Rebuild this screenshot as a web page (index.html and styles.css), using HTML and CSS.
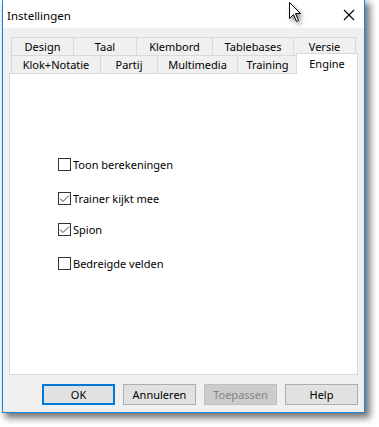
FILE: index.html
```html
<!DOCTYPE html>
<html lang="nl">
<head>
<meta charset="utf-8">
<title>Instellingen</title>
<link rel="stylesheet" href="styles.css">
</head>
<body>
<div class="window">
  <div class="titlebar">
    <span class="title">Instellingen</span>
    <svg class="close" width="12" height="12" viewBox="0 0 12 12"><path d="M1 1 L11 11 M11 1 L1 11" stroke="#000" stroke-width="1.1" fill="none"/></svg>
  </div>
  <div class="content">
    <div class="tabs">
      <div class="tabrow row1">
        <div class="tab">Design</div>
        <div class="tab">Taal</div>
        <div class="tab">Klembord</div>
        <div class="tab">Tablebases</div>
        <div class="tab last">Versie</div>
      </div>
      <div class="tabrow row2">
        <div class="tab">Klok+Notatie</div>
        <div class="tab">Partij</div>
        <div class="tab">Multimedia</div>
        <div class="tab">Training</div>
        <div class="tab selected">Engine</div>
      </div>
    </div>
    <div class="panel">
      <label class="check first"><span class="box"></span><span class="label">Toon berekeningen</span></label>
      <label class="check gap34"><span class="box"><svg width="11" height="11" viewBox="0 0 11 11"><polyline points="1,5.5 4,8.5 10,2.5" fill="none" stroke="#444" stroke-width="1"/></svg></span><span class="label">Trainer kijkt mee</span></label>
      <label class="check gap31"><span class="box"><svg width="11" height="11" viewBox="0 0 11 11"><polyline points="1,5.5 4,8.5 10,2.5" fill="none" stroke="#444" stroke-width="1"/></svg></span><span class="label">Spion</span></label>
      <label class="check gap34"><span class="box"></span><span class="label">Bedreigde velden</span></label>
    </div>
    <div class="buttons">
      <div class="btn default">OK</div>
      <div class="btn">Annuleren</div>
      <div class="btn disabled">Toepassen</div>
      <div class="btn">Help</div>
    </div>
  </div>
</div>
<svg class="cursor" width="14" height="22" viewBox="0 0 14 22"><path d="M0.5 0.5 L0.5 16.5 L4.5 12.5 L7.5 19.5 L9.5 18.5 L6.5 11.5 L11.5 11.5 Z" fill="#fff" stroke="#000" stroke-width="1"/></svg>
</body>
</html>
```
FILE: styles.css
```css
html, body {
  margin: 0;
  padding: 0;
  background: #ffffff;
}
body {
  font-family: "Noto Sans", "Open Sans", sans-serif;
  font-size: 11px;
  color: #000;
  position: relative;
  width: 379px;
  height: 427px;
  overflow: hidden;
}
.window {
  margin-left: 2px;
  width: 361px;
  height: 412px;
  border: 1px solid #1883d7;
  border-top: none;
  background: #f0f0f0;
  display: flex;
  flex-direction: column;
  box-shadow: 4px 4px 7px 1px rgba(0,0,0,0.55);
}
.titlebar {
  height: 28px;
  background: #fff;
  display: flex;
  align-items: center;
  justify-content: space-between;
  padding: 0 9px 0 4px;
  flex: none;
}
.title {
  font-size: 11.5px;
  position: relative;
  top: 1px;
}
.close {
  margin-top: 2px;
}
.content {
  flex: 1;
  padding: 9px 6px 0 6px;
  display: flex;
  flex-direction: column;
}
.tabs {
  padding-left: 2px;
  display: flex;
  flex-direction: column;
}
.tabrow {
  display: grid;
  height: 18px;
}
.row1 {
  grid-template-columns: 62px 63px 76px 81px 63px;
}
.row2 {
  grid-template-columns: 89px 57px 80px 60px 59px;
}
.tab {
  border-top: 1px solid #d9d9d9;
  border-left: 1px solid #d9d9d9;
  display: flex;
  align-items: center;
  justify-content: center;
  line-height: 16px;
  white-space: nowrap;
  background: #f0f0f0;
}
.tab.last {
  border-right: 1px solid #d9d9d9;
}
.row2 .tab:nth-child(4) {
  border-right: none;
}
.tab.selected {
  background: #fff;
  border: 1px solid #d9d9d9;
  border-bottom: none;
  margin: -2px -2px -1px -1px;
  position: relative;
  z-index: 1;
  padding-bottom: 1px;
}
.panel {
  height: 300px;
  background: #fff;
  border: 1px solid #d9d9d9;
  padding-left: 48px;
  display: flex;
  flex-direction: column;
}
.check {
  display: flex;
  align-items: center;
  height: 13px;
}
.check.first { margin-top: 84px; }
.check.gap34 { margin-top: 21px; }
.check.gap31 { margin-top: 18px; }
.box {
  width: 11px;
  height: 11px;
  border: 1px solid #333;
  background: #fff;
  display: flex;
  align-items: center;
  justify-content: center;
  flex: none;
}
.box svg { display: block; }
.label {
  margin-left: 2px;
  line-height: 13px;
}
.buttons {
  display: flex;
  justify-content: flex-end;
  gap: 8px;
  margin-top: 9px;
  padding-right: 0;
}
.btn {
  box-sizing: border-box;
  width: 73px;
  height: 21px;
  background: #e1e1e1;
  border: 1px solid #adadad;
  display: flex;
  align-items: center;
  justify-content: center;
}
.btn.default {
  border: 2px solid #0078d7;
}
.btn.disabled {
  background: #cccccc;
  border-color: #bfbfbf;
  color: #838383;
}
.cursor {
  position: absolute;
  left: 289px;
  top: 2px;
  filter: drop-shadow(2px 3px 2px rgba(0,0,0,0.45));
}
```
